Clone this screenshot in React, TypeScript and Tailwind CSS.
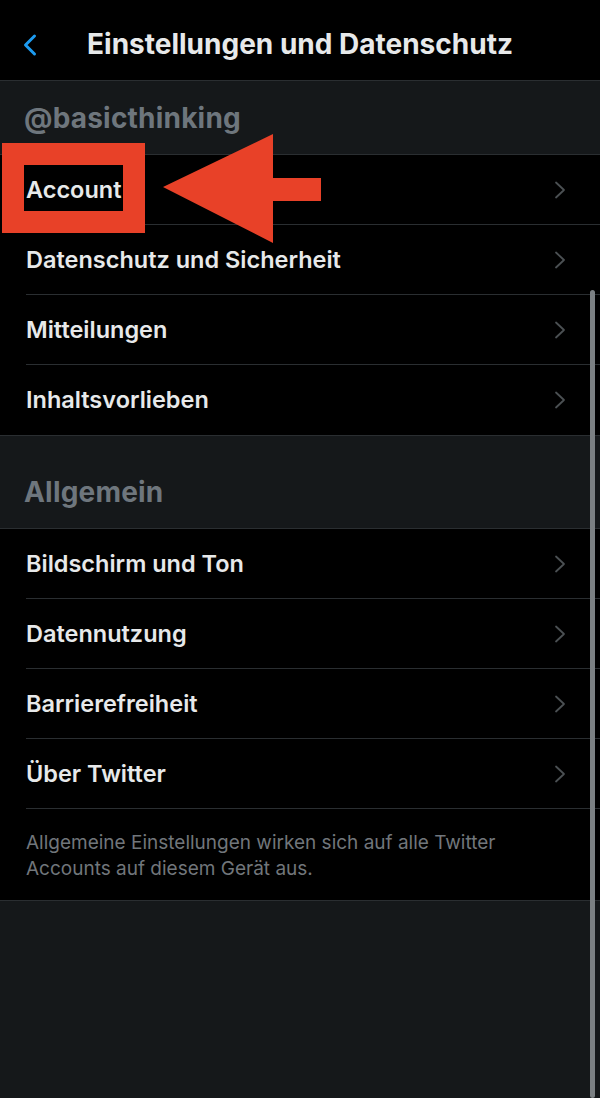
import { ChevronLeft } from 'lucide-react';

const account = ['Account', 'Datenschutz und Sicherheit', 'Mitteilungen', 'Inhaltsvorlieben'];
const general = ['Bildschirm und Ton', 'Datennutzung', 'Barrierefreiheit', 'Über Twitter'];

function Chevron() {
  return (
    <svg width="14" height="18" viewBox="0 0 14 18" fill="none" className="shrink-0">
      <path d="M3 1.5 L11 9 L3 16.5" stroke="#4b5053" strokeWidth="1.8" strokeLinecap="round" strokeLinejoin="round" />
    </svg>
  );
}

function SectionTitle({ children, className = '' }: { children: React.ReactNode; className?: string }) {
  return (
    <div className={`bg-[#15181a] border-b border-[#2a2e31] px-[24px] flex items-end ${className}`}>
      <span className="text-[28px] leading-[34px] font-bold text-[#6e767d] tracking-[0.2px]">{children}</span>
    </div>
  );
}

function Row({ label, last }: { label: string; last?: boolean }) {
  return (
    <div className="pl-[26px] bg-black">
      <div className={`h-[70px] flex items-center justify-between pr-[33px] ${last ? '' : 'border-b border-[#2a2e31]'}`}>
        <span className="text-[23.5px] font-semibold text-[#e7e9ea]">{label}</span>
        <Chevron />
      </div>
    </div>
  );
}

export default function App() {
  return (
    <div className="relative w-[600px] h-[1098px] overflow-hidden bg-[#15181a]" style={{ fontFamily: 'Inter, "Liberation Sans", sans-serif' }}>
      {/* header */}
      <div className="h-[81px] bg-black border-b border-[#2a2e31] flex items-center relative">
        <ChevronLeft className="absolute left-[12px] top-[27px]" size={36} color="#1d9bf0" strokeWidth={2} />
        <div className="w-full text-center text-[28px] font-bold text-[#e7e9ea] pt-[8px]">
          Einstellungen und Datenschutz
        </div>
      </div>

      <SectionTitle className="h-[74px] pb-[19px]">@basicthinking</SectionTitle>
      <div className="border-b border-[#2a2e31]">
        {account.map((t, i) => <Row key={t} label={t} last={i === account.length - 1} />)}
      </div>

      <SectionTitle className="h-[93px] pb-[19px]">Allgemein</SectionTitle>
      <div className="bg-black">
        {general.map((t) => <Row key={t} label={t} />)}
        <div className="px-[26px] pt-[21px] pb-[18px] border-b border-[#2a2e31]">
          <p className="text-[19px] leading-[26px] text-[#71767b]">
            Allgemeine Einstellungen wirken sich auf alle Twitter Accounts auf diesem Gerät aus.
          </p>
        </div>
      </div>

      {/* scroll indicator */}
      <div className="absolute right-[5px] top-[290px] bottom-0 w-[5px] rounded-full bg-[#7b8083]" />

      {/* annotation box */}
      <div className="absolute left-[2px] top-[143px] w-[143px] h-[90px] border-[22px] border-[#e84128]" />
      {/* annotation arrow */}
      <svg className="absolute left-0 top-0" width="600" height="300" viewBox="0 0 600 300">
        <polygon points="163,187 273,134 273,178 321,178 321,201 273,201 273,243" fill="#e84128" />
      </svg>
    </div>
  );
}
